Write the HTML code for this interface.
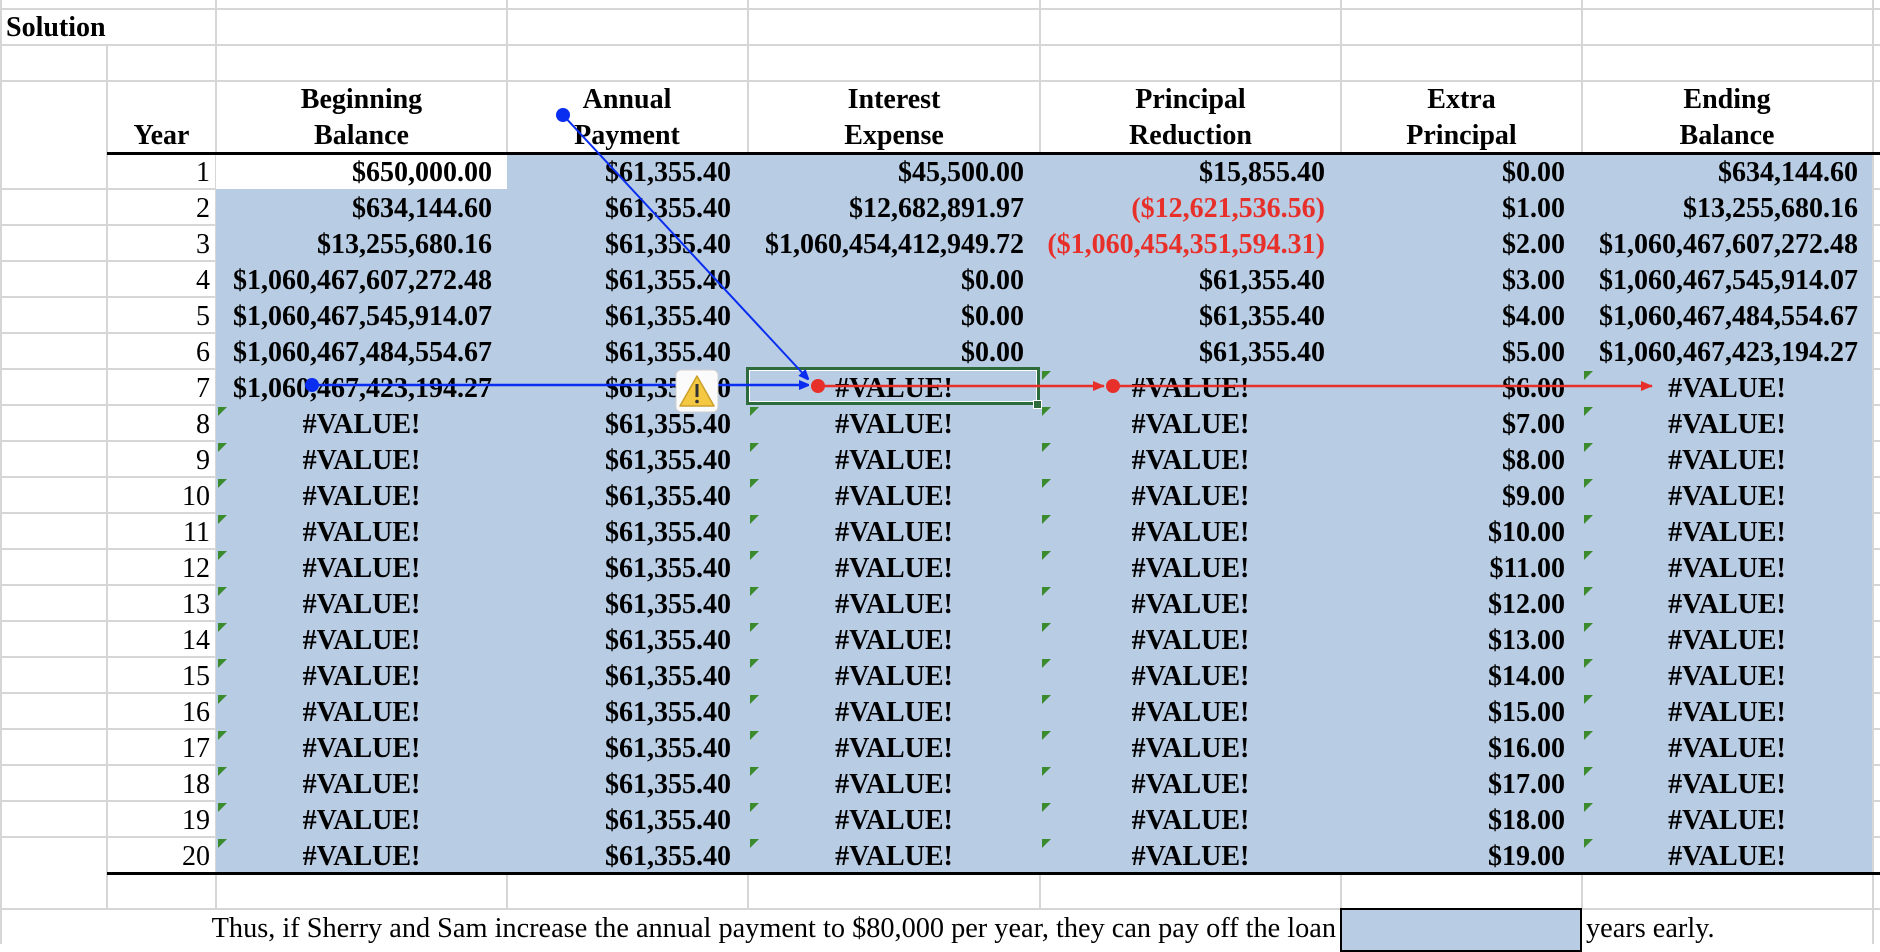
<!DOCTYPE html>
<html><head><meta charset="utf-8"><style>
body{margin:0;width:1880px;height:944px;overflow:hidden;background:#fff;position:relative;font-family:"Liberation Serif","Times New Roman",serif;font-size:28px;color:#000}
.abs{position:absolute}
.h{position:absolute;height:2px;background:#d6d6d6}
.v{position:absolute;width:2px;background:#d6d6d6}
.r{position:absolute;left:0;width:1880px;height:36px;line-height:39px;font-weight:bold;white-space:nowrap}
.r span{position:absolute;top:0;height:36px}
.y{left:107px;width:103px;text-align:right;font-weight:normal}
.c{left:196px;width:296px;text-align:right}
.d{left:507px;width:224px;text-align:right}
.e{left:728px;width:296px;text-align:right}
.f{left:1020px;width:305px;text-align:right}
.g{left:1341px;width:224px;text-align:right}
.hh{left:1562px;width:296px;text-align:right}
.cc{text-align:center!important;padding-right:0}
.c.cc{left:216px;width:291px}
.e.cc{left:748px;width:292px}
.f.cc{left:1040px;width:301px}
.hh.cc{left:1582px;width:290px}
.red{color:#e8302a}
.t{position:absolute;width:0;height:0;border-top:9px solid #3c8a2e;border-right:9px solid transparent}
.hd{position:absolute;top:82px;height:72px;line-height:36px;text-align:center;font-weight:bold}
</style></head><body>
<!-- gridlines -->
<div class="h" style="left:0;top:8px;width:1880px"></div>
<div class="h" style="left:0;top:44px;width:1880px"></div>
<div class="h" style="left:0;top:80px;width:1880px"></div>
<div class="v" style="left:0;top:0;height:944px"></div>
<div class="v" style="left:215px;top:0;height:909px"></div>
<div class="v" style="left:506px;top:0;height:909px"></div>
<div class="v" style="left:747px;top:0;height:909px"></div>
<div class="v" style="left:1039px;top:0;height:909px"></div>
<div class="v" style="left:1340px;top:0;height:909px"></div>
<div class="v" style="left:1581px;top:0;height:909px"></div>
<div class="v" style="left:1872px;top:0;height:944px"></div>
<div class="v" style="left:106px;top:45px;height:864px"></div>
<div class="h" style="left:0;top:188px;width:1880px"></div><div class="h" style="left:0;top:224px;width:1880px"></div><div class="h" style="left:0;top:260px;width:1880px"></div><div class="h" style="left:0;top:296px;width:1880px"></div><div class="h" style="left:0;top:332px;width:1880px"></div><div class="h" style="left:0;top:368px;width:1880px"></div><div class="h" style="left:0;top:404px;width:1880px"></div><div class="h" style="left:0;top:440px;width:1880px"></div><div class="h" style="left:0;top:476px;width:1880px"></div><div class="h" style="left:0;top:512px;width:1880px"></div><div class="h" style="left:0;top:548px;width:1880px"></div><div class="h" style="left:0;top:584px;width:1880px"></div><div class="h" style="left:0;top:620px;width:1880px"></div><div class="h" style="left:0;top:656px;width:1880px"></div><div class="h" style="left:0;top:692px;width:1880px"></div><div class="h" style="left:0;top:728px;width:1880px"></div><div class="h" style="left:0;top:764px;width:1880px"></div><div class="h" style="left:0;top:800px;width:1880px"></div><div class="h" style="left:0;top:836px;width:1880px"></div><div class="h" style="left:0;top:908px;width:1880px"></div>
<!-- fills -->
<div class="abs" style="left:216px;top:153px;width:291px;height:36px;background:#fff"></div>
<div class="abs" style="left:507px;top:153px;width:1365px;height:720px;background:#b8cce4"></div>
<div class="abs" style="left:216px;top:189px;width:291px;height:684px;background:#b8cce4"></div>
<div class="abs" style="left:107px;top:152px;width:1773px;height:3px;background:#000"></div>
<div class="abs" style="left:107px;top:872px;width:1773px;height:3px;background:#000"></div>
<!-- header -->
<div class="abs" style="left:6px;top:10px;height:36px;line-height:36px;font-weight:bold;font-size:28px">Solution</div>
<div class="hd" style="left:107px;width:109px;top:118px;height:36px">Year</div>
<div class="hd" style="left:216px;width:291px">Beginning<br>Balance</div>
<div class="hd" style="left:507px;width:240px">Annual<br>Payment</div>
<div class="hd" style="left:748px;width:292px">Interest<br>Expense</div>
<div class="hd" style="left:1040px;width:301px">Principal<br>Reduction</div>
<div class="hd" style="left:1341px;width:241px">Extra<br>Principal</div>
<div class="hd" style="left:1582px;width:290px">Ending<br>Balance</div>
<!-- rows -->
<div class="r" style="top:153px"><span class="y">1</span><span class="c">$650,000.00</span><span class="d">$61,355.40</span><span class="e">$45,500.00</span><span class="f">$15,855.40</span><span class="g">$0.00</span><span class="hh">$634,144.60</span></div>
<div class="r" style="top:189px"><span class="y">2</span><span class="c">$634,144.60</span><span class="d">$61,355.40</span><span class="e">$12,682,891.97</span><span class="f red">($12,621,536.56)</span><span class="g">$1.00</span><span class="hh">$13,255,680.16</span></div>
<div class="r" style="top:225px"><span class="y">3</span><span class="c">$13,255,680.16</span><span class="d">$61,355.40</span><span class="e">$1,060,454,412,949.72</span><span class="f red">($1,060,454,351,594.31)</span><span class="g">$2.00</span><span class="hh">$1,060,467,607,272.48</span></div>
<div class="r" style="top:261px"><span class="y">4</span><span class="c">$1,060,467,607,272.48</span><span class="d">$61,355.40</span><span class="e">$0.00</span><span class="f">$61,355.40</span><span class="g">$3.00</span><span class="hh">$1,060,467,545,914.07</span></div>
<div class="r" style="top:297px"><span class="y">5</span><span class="c">$1,060,467,545,914.07</span><span class="d">$61,355.40</span><span class="e">$0.00</span><span class="f">$61,355.40</span><span class="g">$4.00</span><span class="hh">$1,060,467,484,554.67</span></div>
<div class="r" style="top:333px"><span class="y">6</span><span class="c">$1,060,467,484,554.67</span><span class="d">$61,355.40</span><span class="e">$0.00</span><span class="f">$61,355.40</span><span class="g">$5.00</span><span class="hh">$1,060,467,423,194.27</span></div>
<div class="r" style="top:369px"><span class="y">7</span><span class="c">$1,060,467,423,194.27</span><span class="d">$61,355.40</span><span class="e cc">#VALUE!</span><span class="f cc">#VALUE!</span><span class="g">$6.00</span><span class="hh cc">#VALUE!</span></div>
<div class="r" style="top:405px"><span class="y">8</span><span class="c cc">#VALUE!</span><span class="d">$61,355.40</span><span class="e cc">#VALUE!</span><span class="f cc">#VALUE!</span><span class="g">$7.00</span><span class="hh cc">#VALUE!</span></div>
<div class="r" style="top:441px"><span class="y">9</span><span class="c cc">#VALUE!</span><span class="d">$61,355.40</span><span class="e cc">#VALUE!</span><span class="f cc">#VALUE!</span><span class="g">$8.00</span><span class="hh cc">#VALUE!</span></div>
<div class="r" style="top:477px"><span class="y">10</span><span class="c cc">#VALUE!</span><span class="d">$61,355.40</span><span class="e cc">#VALUE!</span><span class="f cc">#VALUE!</span><span class="g">$9.00</span><span class="hh cc">#VALUE!</span></div>
<div class="r" style="top:513px"><span class="y">11</span><span class="c cc">#VALUE!</span><span class="d">$61,355.40</span><span class="e cc">#VALUE!</span><span class="f cc">#VALUE!</span><span class="g">$10.00</span><span class="hh cc">#VALUE!</span></div>
<div class="r" style="top:549px"><span class="y">12</span><span class="c cc">#VALUE!</span><span class="d">$61,355.40</span><span class="e cc">#VALUE!</span><span class="f cc">#VALUE!</span><span class="g">$11.00</span><span class="hh cc">#VALUE!</span></div>
<div class="r" style="top:585px"><span class="y">13</span><span class="c cc">#VALUE!</span><span class="d">$61,355.40</span><span class="e cc">#VALUE!</span><span class="f cc">#VALUE!</span><span class="g">$12.00</span><span class="hh cc">#VALUE!</span></div>
<div class="r" style="top:621px"><span class="y">14</span><span class="c cc">#VALUE!</span><span class="d">$61,355.40</span><span class="e cc">#VALUE!</span><span class="f cc">#VALUE!</span><span class="g">$13.00</span><span class="hh cc">#VALUE!</span></div>
<div class="r" style="top:657px"><span class="y">15</span><span class="c cc">#VALUE!</span><span class="d">$61,355.40</span><span class="e cc">#VALUE!</span><span class="f cc">#VALUE!</span><span class="g">$14.00</span><span class="hh cc">#VALUE!</span></div>
<div class="r" style="top:693px"><span class="y">16</span><span class="c cc">#VALUE!</span><span class="d">$61,355.40</span><span class="e cc">#VALUE!</span><span class="f cc">#VALUE!</span><span class="g">$15.00</span><span class="hh cc">#VALUE!</span></div>
<div class="r" style="top:729px"><span class="y">17</span><span class="c cc">#VALUE!</span><span class="d">$61,355.40</span><span class="e cc">#VALUE!</span><span class="f cc">#VALUE!</span><span class="g">$16.00</span><span class="hh cc">#VALUE!</span></div>
<div class="r" style="top:765px"><span class="y">18</span><span class="c cc">#VALUE!</span><span class="d">$61,355.40</span><span class="e cc">#VALUE!</span><span class="f cc">#VALUE!</span><span class="g">$17.00</span><span class="hh cc">#VALUE!</span></div>
<div class="r" style="top:801px"><span class="y">19</span><span class="c cc">#VALUE!</span><span class="d">$61,355.40</span><span class="e cc">#VALUE!</span><span class="f cc">#VALUE!</span><span class="g">$18.00</span><span class="hh cc">#VALUE!</span></div>
<div class="r" style="top:837px"><span class="y">20</span><span class="c cc">#VALUE!</span><span class="d">$61,355.40</span><span class="e cc">#VALUE!</span><span class="f cc">#VALUE!</span><span class="g">$19.00</span><span class="hh cc">#VALUE!</span></div>
<!-- green triangles -->
<div class="t" style="left:218px;top:407px"></div><div class="t" style="left:218px;top:443px"></div><div class="t" style="left:218px;top:479px"></div><div class="t" style="left:218px;top:515px"></div><div class="t" style="left:218px;top:551px"></div><div class="t" style="left:218px;top:587px"></div><div class="t" style="left:218px;top:623px"></div><div class="t" style="left:218px;top:659px"></div><div class="t" style="left:218px;top:695px"></div><div class="t" style="left:218px;top:731px"></div><div class="t" style="left:218px;top:767px"></div><div class="t" style="left:218px;top:803px"></div><div class="t" style="left:218px;top:839px"></div>
<div class="t" style="left:750px;top:407px"></div><div class="t" style="left:750px;top:443px"></div><div class="t" style="left:750px;top:479px"></div><div class="t" style="left:750px;top:515px"></div><div class="t" style="left:750px;top:551px"></div><div class="t" style="left:750px;top:587px"></div><div class="t" style="left:750px;top:623px"></div><div class="t" style="left:750px;top:659px"></div><div class="t" style="left:750px;top:695px"></div><div class="t" style="left:750px;top:731px"></div><div class="t" style="left:750px;top:767px"></div><div class="t" style="left:750px;top:803px"></div><div class="t" style="left:750px;top:839px"></div>
<div class="t" style="left:1042px;top:371px"></div><div class="t" style="left:1042px;top:407px"></div><div class="t" style="left:1042px;top:443px"></div><div class="t" style="left:1042px;top:479px"></div><div class="t" style="left:1042px;top:515px"></div><div class="t" style="left:1042px;top:551px"></div><div class="t" style="left:1042px;top:587px"></div><div class="t" style="left:1042px;top:623px"></div><div class="t" style="left:1042px;top:659px"></div><div class="t" style="left:1042px;top:695px"></div><div class="t" style="left:1042px;top:731px"></div><div class="t" style="left:1042px;top:767px"></div><div class="t" style="left:1042px;top:803px"></div><div class="t" style="left:1042px;top:839px"></div>
<div class="t" style="left:1584px;top:371px"></div><div class="t" style="left:1584px;top:407px"></div><div class="t" style="left:1584px;top:443px"></div><div class="t" style="left:1584px;top:479px"></div><div class="t" style="left:1584px;top:515px"></div><div class="t" style="left:1584px;top:551px"></div><div class="t" style="left:1584px;top:587px"></div><div class="t" style="left:1584px;top:623px"></div><div class="t" style="left:1584px;top:659px"></div><div class="t" style="left:1584px;top:695px"></div><div class="t" style="left:1584px;top:731px"></div><div class="t" style="left:1584px;top:767px"></div><div class="t" style="left:1584px;top:803px"></div><div class="t" style="left:1584px;top:839px"></div>
<!-- selection -->
<div class="abs" style="left:746px;top:367px;width:288px;height:32px;border:3px solid #2e6b3c;box-shadow:inset 0 0 0 1px #fff"></div>
<div class="abs" style="left:1033px;top:400px;width:7px;height:7px;background:#2e6b3c;border:1px solid #fff"></div>
<!-- bottom text -->
<div class="abs" style="left:0;top:909px;width:1336px;height:36px;line-height:39px;text-align:right;font-size:28.3px">Thus, if Sherry and Sam increase the annual payment to $80,000 per year, they can pay off the loan</div>
<div class="abs" style="left:1340px;top:908px;width:238px;height:40px;background:#b8cce4;border:2px solid #000"></div>
<div class="abs" style="left:1586px;top:909px;height:36px;line-height:39px;font-size:28.3px">years early.</div>
<!-- arrows -->
<svg class="abs" style="left:0;top:0" width="1880" height="944">
<defs>
<marker id="bm" markerWidth="10" markerHeight="10" refX="9" refY="5" orient="auto" markerUnits="userSpaceOnUse"><path d="M0,0 L12,5 L0,10 z" fill="#0a2ef0"/></marker>
<marker id="rm" markerWidth="12" markerHeight="10" refX="11" refY="5" orient="auto" markerUnits="userSpaceOnUse"><path d="M0,0 L12,5 L0,10 z" fill="#e8302a"/></marker>
</defs>
<line x1="563" y1="115" x2="808" y2="379" stroke="#0a2ef0" stroke-width="2" marker-end="url(#bm)"/>
<line x1="312" y1="385" x2="808" y2="385" stroke="#0a2ef0" stroke-width="2.5" marker-end="url(#bm)"/>
<circle cx="563" cy="115" r="7" fill="#0a2ef0"/>
<circle cx="312" cy="385" r="7" fill="#0a2ef0"/>
<line x1="818" y1="386" x2="1104" y2="386" stroke="#e8302a" stroke-width="2.5" marker-end="url(#rm)"/>
<line x1="1113" y1="386" x2="1652" y2="386" stroke="#e8302a" stroke-width="2.5" marker-end="url(#rm)"/>
<circle cx="818" cy="386" r="7" fill="#e8302a"/>
<circle cx="1113" cy="386" r="7" fill="#e8302a"/>
<rect x="676" y="370" width="42" height="42" rx="5" fill="#fbfbfb" stroke="#cfcfcf"/>
<path d="M697,376 L714,406 L680,406 Z" fill="#f5c842" stroke="#c9a02a" stroke-width="1.5" stroke-linejoin="round"/>
<rect x="695.5" y="384" width="3" height="13" fill="#333"/>
<circle cx="697" cy="401.5" r="1.8" fill="#333"/>
</svg>
</body></html>
